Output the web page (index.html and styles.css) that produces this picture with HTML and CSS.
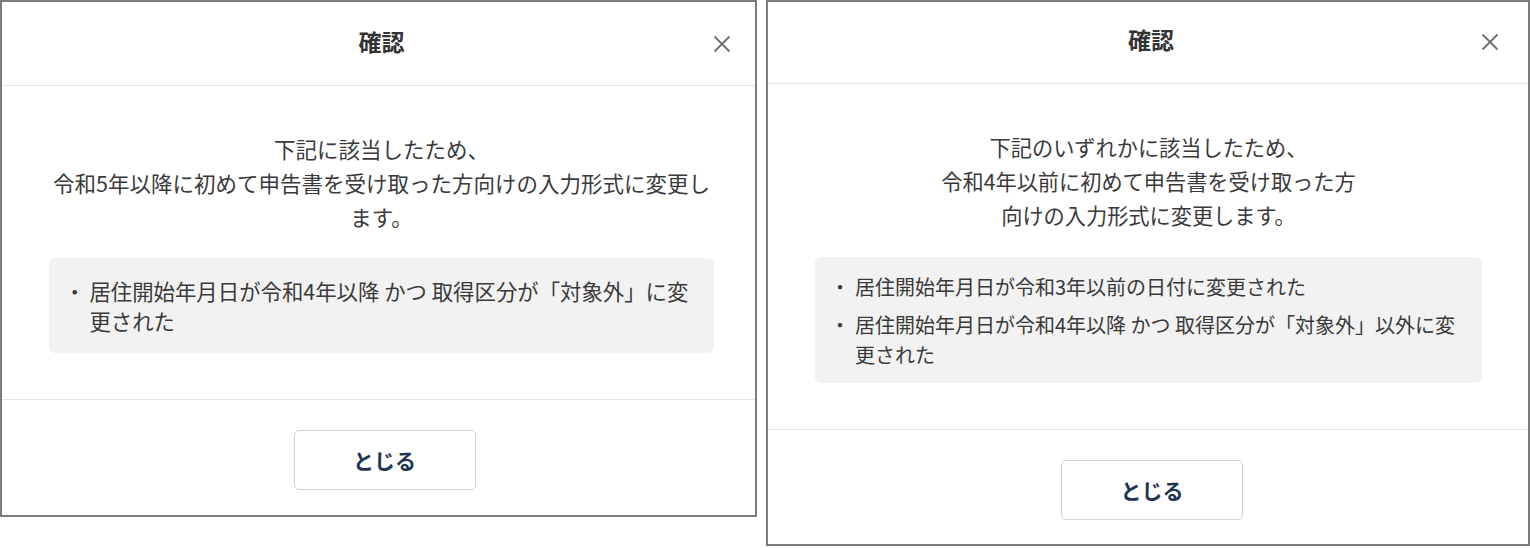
FILE: index.html
```html
<!DOCTYPE html>
<html lang="ja">
<head>
  <meta charset="UTF-8" />
  <meta name="viewport" content="width=device-width, initial-scale=1" />
  <title>確認</title>
  <link rel="stylesheet" href="styles.css">
</head>
<body>
  <div class="screens">

    <!-- 令和5年以降 -->
    <section class="dialog dialog-a">
      <header class="dialog-head">
        <h2 class="dialog-title">確認</h2>
        <button class="dialog-x" aria-label="閉じる">
          <svg viewBox="0 0 18 18" width="18" height="18"><path d="M1.5 1.5 L16.5 16.5 M16.5 1.5 L1.5 16.5" /></svg>
        </button>
      </header>
      <div class="dialog-body">
        <p class="lead">下記に該当したため、<br>令和5年以降に初めて申告書を受け取った方向けの入力形式に変更し<br>ます。</p>
        <ul class="reasons">
          <li>居住開始年月日が令和4年以降 かつ 取得区分が「対象外」に変更された</li>
        </ul>
      </div>
      <footer class="dialog-foot">
        <button class="btn-close">とじる</button>
      </footer>
    </section>

    <!-- 令和4年以前 -->
    <section class="dialog dialog-b">
      <header class="dialog-head">
        <h2 class="dialog-title">確認</h2>
        <button class="dialog-x" aria-label="閉じる">
          <svg viewBox="0 0 18 18" width="18" height="18"><path d="M1.5 1.5 L16.5 16.5 M16.5 1.5 L1.5 16.5" /></svg>
        </button>
      </header>
      <div class="dialog-body">
        <p class="lead">下記のいずれかに該当したため、<br>令和4年以前に初めて申告書を受け取った方<br>向けの入力形式に変更します。</p>
        <ul class="reasons">
          <li>居住開始年月日が令和3年以前の日付に変更された</li>
          <li>居住開始年月日が令和4年以降 かつ 取得区分が「対象外」以外に変更された</li>
        </ul>
      </div>
      <footer class="dialog-foot">
        <button class="btn-close">とじる</button>
      </footer>
    </section>

  </div>
</body>
</html>
```

FILE: styles.css
```css
/* Base */
* {
  box-sizing: border-box;
}
body {
  margin: 0;
  background: #fff;
  color: #333;
  font-family: "Noto Sans CJK JP", "Noto Sans", sans-serif;
}

.screens {
  display: flex;
  align-items: flex-start;
  gap: 9px;
}

/* Dialog */
.dialog {
  display: flex;
  flex-direction: column;
  background: #fff;
  border: 2px solid #7b7b7b;
}
.dialog-a {
  width: 757px;
}
.dialog-b {
  width: 764px;
}

.dialog-head {
  position: relative;
  display: flex;
  justify-content: center;
  align-items: center;
  height: 84px;
  border-bottom: 1px solid #e6e6e6;
}
.dialog-b .dialog-head {
  height: 82px;
}
.dialog-title {
  margin: 0 0 6px 6px;
  font-size: 23px;
  font-weight: 700;
  color: #333;
}
.dialog-b .dialog-title {
  margin-bottom: 8px;
}
.dialog-x {
  position: absolute;
  right: 24px;
  top: 50%;
  transform: translateY(-50%);
  display: flex;
  padding: 0;
  background: none;
  border: none;
  cursor: pointer;
}
.dialog-b .dialog-x {
  right: 29px;
  margin-top: -1px;
}
.dialog-x path {
  stroke: #6f6f6f;
  stroke-width: 1.8;
  fill: none;
}

.dialog-body {
  padding: 46px 41px 46px 47px;
  border-bottom: 1px solid #e6e6e6;
}
.dialog-b .dialog-body {
  padding: 46px 46px 46px 47px;
}

.lead {
  margin: 0 0 24px;
  font-size: 21.5px;
  line-height: 34px;
  text-align: center;
  color: #3a3a3a;
}
.dialog-b .lead {
  margin-bottom: 25px;
  font-size: 21.2px;
}

.reasons {
  list-style: none;
  margin: 0;
  padding: 18px 20px 17px 15px;
  background: #f2f2f2;
  border-radius: 6px;
  font-size: 21.4px;
  line-height: 30px;
  color: #3a3a3a;
}
.dialog-b .reasons {
  padding: 15px 20px 13px 15px;
  font-size: 20px;
}
.reasons li {
  display: flex;
}
.reasons li + li {
  margin-top: 8px;
}
.reasons li::before {
  content: "・";
  flex: none;
  width: 1em;
  margin-right: 4px;
  text-align: center;
}
.dialog-b .reasons li::before {
  margin-right: 5px;
}

.dialog-foot {
  display: flex;
  justify-content: center;
  padding: 30px 0 25px 12px;
}
.dialog-b .dialog-foot {
  padding: 30px 0 24px 8px;
}
.btn-close {
  width: 182px;
  height: 60px;
  background: #fff;
  border: 1px solid #d3d3d3;
  border-radius: 5px;
  font-family: inherit;
  font-size: 21px;
  font-weight: 700;
  color: #1b3553;
  cursor: pointer;
}
```
